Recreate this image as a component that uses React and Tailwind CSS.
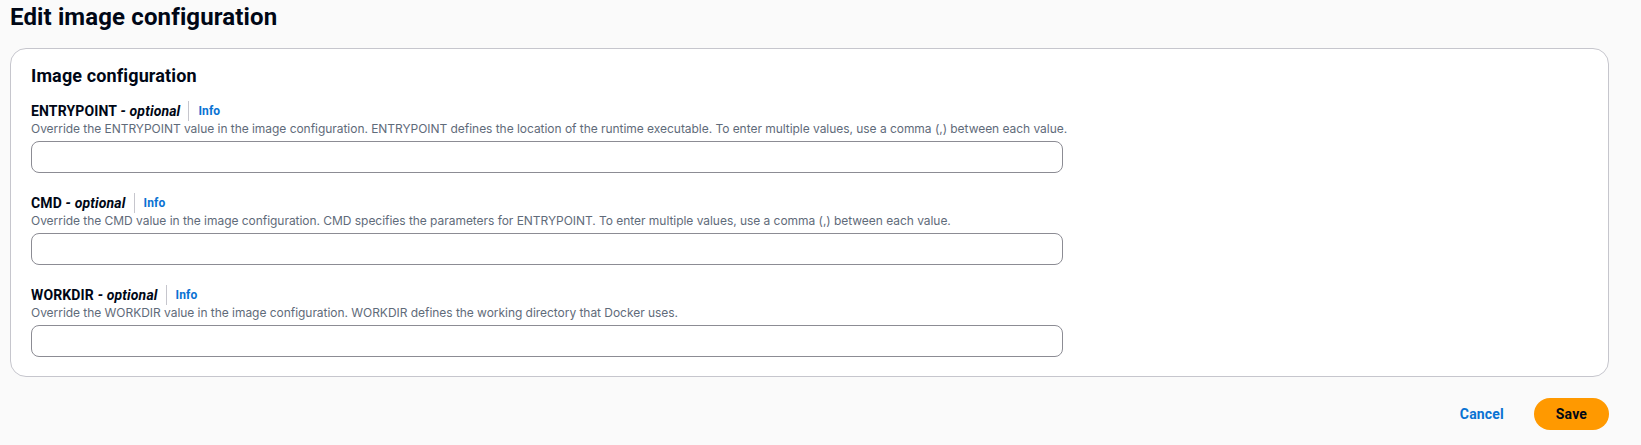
import React from 'react';

const fields = [
  {
    name: 'ENTRYPOINT',
    help: 'Override the ENTRYPOINT value in the image configuration. ENTRYPOINT defines the location of the runtime executable. To enter multiple values, use a comma (,) between each value.',
  },
  {
    name: 'CMD',
    help: 'Override the CMD value in the image configuration. CMD specifies the parameters for ENTRYPOINT. To enter multiple values, use a comma (,) between each value.',
  },
  {
    name: 'WORKDIR',
    help: 'Override the WORKDIR value in the image configuration. WORKDIR defines the working directory that Docker uses.',
  },
];

function Field({ name, help }) {
  return (
    <div className="flex flex-col">
      <div className="flex items-center h-[20px]">
        <label className="font-['Roboto',sans-serif] text-[14px] leading-[20px] font-bold tracking-[0.15px] text-[#000716]">
          {name} <i>- optional</i>
        </label>
        <span className="ml-[8px] h-[20px] border-l border-[#c6c6cd]" />
        <a href="#" className="ml-[9px] font-['Roboto',sans-serif] text-[12px] leading-[16px] font-bold tracking-[0.15px] text-[#0972d3]">
          Info
        </a>
      </div>
      <p className="text-[12px] leading-[16px] tracking-[-0.04px] text-[#5f6b7a]">{help}</p>
      <input
        type="text"
        className="mt-[4px] w-[1032px] h-[32px] rounded-[8px] border border-[#8c8c94] bg-white px-3 text-[14px] outline-none"
      />
    </div>
  );
}

export default function App() {
  return (
    <div className="w-[1641px] h-[445px] bg-[#fafafa] text-[#000716] font-['Inter',sans-serif] overflow-hidden">
      <div className="pl-[10px] pr-[32px]">
        <h1 className="pt-[2px] font-['Roboto',sans-serif] text-[24px] leading-[30px] font-bold tracking-[0.13px]">
          Edit image configuration
        </h1>

        <div className="mt-[16px] rounded-[16px] border border-[#c6c6cd] bg-white px-[20px] pt-[16px] pb-[19px]">
          <h2 className="font-['Roboto',sans-serif] text-[18px] leading-[22px] font-bold tracking-[0.13px]">
            Image configuration
          </h2>
          <div className="mt-[14px] flex flex-col gap-[20px]">
            {fields.map((f) => (
              <Field key={f.name} name={f.name} help={f.help} />
            ))}
          </div>
        </div>

        <div className="mt-[21px] flex justify-end items-center gap-[10px] font-['Roboto',sans-serif] tracking-[0.15px]">
          <button className="px-[20px] h-[32px] text-[14px] font-bold text-[#0972d3]">Cancel</button>
          <button className="px-[22px] h-[32px] rounded-full bg-[#ff9900] text-[14px] font-bold text-[#000716]">
            Save
          </button>
        </div>
      </div>
    </div>
  );
}
